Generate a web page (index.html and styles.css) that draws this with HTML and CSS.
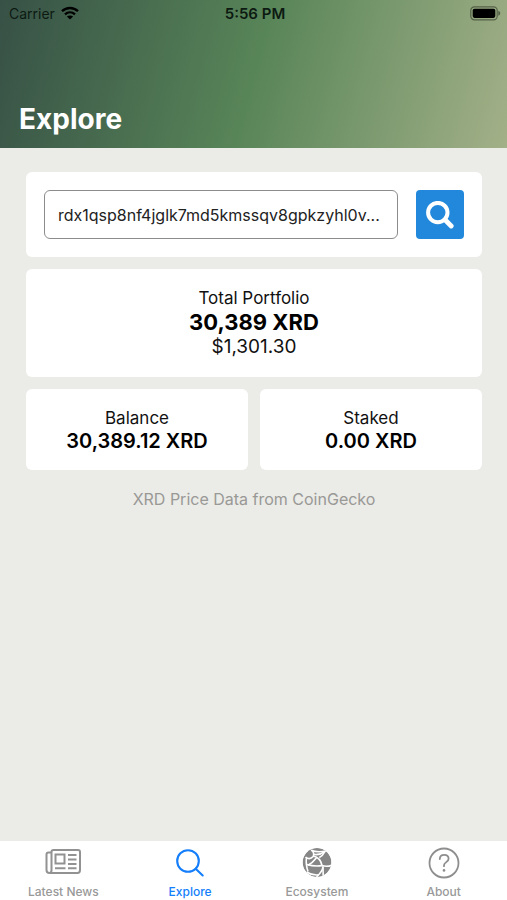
FILE: index.html
```html
<!DOCTYPE html>
<html lang="en">
<head>
<meta charset="utf-8">
<meta name="viewport" content="width=device-width, initial-scale=1">
<title>Explore</title>
<link rel="stylesheet" href="styles.css">
</head>
<body>
<header class="header">
  <div class="status">
    <div class="status-left">
      <span>Carrier</span>
      <svg class="wifi" viewBox="0 0 18 14" aria-hidden="true">
        <g fill="none" stroke="#000" stroke-width="2.4">
          <path d="M1 5.2C5.6 .9 12.4 .9 17 5.2"/>
          <path d="M4 8.3C6.9 5.7 11.1 5.7 14 8.3"/>
        </g>
        <path d="M9 13.6 5.9 10.5C7.7 9 10.3 9 12.1 10.5Z"/>
      </svg>
    </div>
    <span class="clock">5:56 PM</span>
    <div class="status-right">
      <svg class="battery" viewBox="0 0 31 15" aria-hidden="true">
        <rect x=".8" y=".8" width="26.4" height="13" rx="3.6" fill="none" stroke="#000" stroke-opacity=".42" stroke-width="1.2"/>
        <rect x="2.7" y="2.7" width="22.6" height="9.2" rx="1.8"/>
        <path d="M28.3 4.8C30.8 5.8 30.8 8.8 28.3 9.8Z" fill-opacity=".45"/>
      </svg>
    </div>
  </div>
  <h1 class="title">Explore</h1>
</header>

<main class="content">
  <form class="card search">
    <input class="address" type="text" aria-label="Wallet address" value="rdx1qsp8nf4jglk7md5kmssqv8gpkzyhl0v...">
    <button class="search-button" type="button" aria-label="Search">
      <svg class="search-icon" viewBox="0 0 28 28" fill="none" stroke="#fff" aria-hidden="true">
        <circle cx="11.8" cy="11.6" r="9.7" stroke-width="4"/>
        <path d="M19 18.8 25.2 25" stroke-width="4.8" stroke-linecap="round"/>
      </svg>
    </button>
  </form>

  <section class="card total">
    <h2 class="label">Total Portfolio</h2>
    <p class="amount amount-large">30,389 XRD</p>
    <p class="fiat">$1,301.30</p>
  </section>

  <div class="pair">
    <section class="card stat">
      <h2 class="label">Balance</h2>
      <p class="amount">30,389.12 XRD</p>
    </section>
    <section class="card stat">
      <h2 class="label">Staked</h2>
      <p class="amount">0.00 XRD</p>
    </section>
  </div>

  <p class="credit">XRD Price Data from CoinGecko</p>
</main>

<nav class="tabs">
  <a class="tab" href="#news">
    <svg class="tab-icon" viewBox="0 0 36 32" fill="none" stroke="#929292" stroke-width="2" aria-hidden="true">
      <path d="M8 3H33Q35 3 35 5V23Q35 26 32.500 26H4.500Q1.500 26 1.500 23V7.500Q1.500 5.500 3.500 5.500H6.500M6.500 5V23Q6.500 26 4.500 26M6.500 5Q6.500 3 8.500 3"/>
      <rect x="10.500" y="7.500" width="9" height="9"/>
      <path d="M23 8H31.500M23 12.500H31.500M23 17H31.500M10 21.200H20.500M23 21.200H31.500"/>
    </svg>
    <span>Latest News</span>
  </a>
  <a class="tab active" href="#explore" aria-current="page">
    <svg class="tab-icon" viewBox="0 0 36 32" fill="none" stroke="#147efb" stroke-width="2.100" stroke-linecap="round" aria-hidden="true">
      <circle cx="16" cy="14" r="10.800"/>
      <path d="M23.700 21.700 30.700 28.500"/>
    </svg>
    <span>Explore</span>
  </a>
  <a class="tab" href="#ecosystem">
    <svg class="tab-icon" viewBox="0 0 36 32" aria-hidden="true">
      <defs>
        <clipPath id="globe"><circle cx="18" cy="15.500" r="14.400"/></clipPath>
      </defs>
      <g clip-path="url(#globe)">
        <circle cx="18" cy="15.500" r="14.400" fill="#868686"/>
        <g fill="none" stroke="#fff" stroke-width="1.600">
          <path d="M12 3.200Q18 5.800 27 4"/>
          <path d="M14.500 7.300Q20.500 8.600 26 4.300"/>
          <path d="M6.500 10Q10.500 13.500 14.200 9.500 15.800 6 12.500 3"/>
          <path d="M7.500 10.500Q6.500 17 9 24.500"/>
          <path d="M14.200 9Q21.500 10.500 23 18.600"/>
          <path d="M20.300 10.500Q23.500 9 26 4.300"/>
          <path d="M9 18.200Q13.500 16 17.500 10.800"/>
          <path d="M8 17.500Q15.500 19.800 23 18.600 28.500 20.300 33 18"/>
          <path d="M24 19.500Q23.500 24.500 17.500 30"/>
          <path d="M24 19.500 24.200 30"/>
          <path d="M7.500 25Q13 28.600 20 27.800"/>
        </g>
      </g>
    </svg>
    <span>Ecosystem</span>
  </a>
  <a class="tab" href="#about">
    <svg class="tab-icon" viewBox="0 0 36 32" fill="none" stroke="#8e8e8e" stroke-width="1.800" stroke-linecap="round" aria-hidden="true">
      <circle cx="18" cy="16" r="14.500"/>
      <path d="M13.800 12C13.900 9.200 15.600 7.900 18.200 7.900 20.900 7.900 22.600 9.500 22.600 11.700 22.600 15 18 15.200 18 18.300V19.200"/>
      <circle cx="18" cy="23.400" r="1.300" fill="#8e8e8e" stroke="none"/>
    </svg>
    <span>About</span>
  </a>
</nav>
</body>
</html>
```
FILE: styles.css
```css
* {
  box-sizing: border-box;
}

body {
  margin: 0;
  min-height: 100vh;
  display: flex;
  flex-direction: column;
  background: #ebebe7;
  color: #111;
  font-family: Inter, "Liberation Sans", sans-serif;
}

h1, h2, p {
  margin: 0;
}

.header {
  display: flex;
  flex-direction: column;
  gap: 72px;
  padding-bottom: 10px;
  background: linear-gradient(105deg, #375146 0%, #588558 50%, #a3b088 100%);
}

.status {
  display: grid;
  grid-template-columns: 1fr auto 1fr;
  align-items: center;
  height: 28px;
  padding: 0 6px 2px 9px;
  color: #0c1a12;
  font-size: 14px;
}

.status-left {
  display: flex;
  align-items: center;
  gap: 6px;
}

.status-right {
  display: flex;
  justify-content: flex-end;
}

.clock {
  font-size: 15px;
  font-weight: 600;
}

.wifi {
  width: 18px;
  height: 14px;
}

.battery {
  width: 31px;
  height: 15px;
}

.title {
  padding-left: 19px;
  color: #fff;
  font-size: 28px;
  font-weight: 700;
  line-height: 38px;
}

.content {
  flex: 1;
  display: flex;
  flex-direction: column;
  gap: 12px;
  padding: 24px 25px 12px 26px;
}

.card {
  background: #fff;
  border-radius: 6px;
}

.search {
  display: flex;
  gap: 18px;
  padding: 18px;
}

.address {
  flex: 1;
  min-width: 0;
  height: 49px;
  padding: 0 0 0 13px;
  border: 1px solid #8c8c8c;
  border-radius: 6px;
  background: #fff;
  color: #222;
  font: 16px Inter, "Liberation Sans", sans-serif;
  text-overflow: ellipsis;
}

.search-button {
  display: flex;
  align-items: center;
  justify-content: center;
  width: 48px;
  height: 49px;
  padding: 0;
  border: 0;
  border-radius: 4px;
  background: #2188dc;
}

.search-icon {
  width: 28px;
  height: 28px;
}

.total,
.stat {
  text-align: center;
}

.total {
  padding: 18px 17px;
}

.stat {
  padding: 18px 12px;
}

.label {
  font-size: 17px;
  font-weight: 400;
  line-height: 23px;
}

.amount {
  color: #000;
  font-size: 20px;
  font-weight: 600;
  line-height: 22px;
}

.amount-large {
  font-size: 22px;
  font-weight: 700;
  line-height: 25px;
}

.fiat {
  font-size: 19px;
  line-height: 24px;
}

.pair {
  display: grid;
  grid-template-columns: 1fr 1fr;
  gap: 12px;
}

.credit {
  padding-top: 6px;
  color: #999996;
  font-size: 16px;
  line-height: 23px;
  text-align: center;
}

.tabs {
  display: grid;
  grid-template-columns: repeat(4, 1fr);
  padding: 6px 0 2px;
  background: #fff;
}

.tab {
  display: flex;
  flex-direction: column;
  align-items: center;
  gap: 6px;
  color: #999;
  font-size: 12px;
  font-weight: 500;
  line-height: 13px;
  text-decoration: none;
}

.tab-icon {
  width: 36px;
  height: 32px;
}

.active {
  color: #147efb;
}
```
